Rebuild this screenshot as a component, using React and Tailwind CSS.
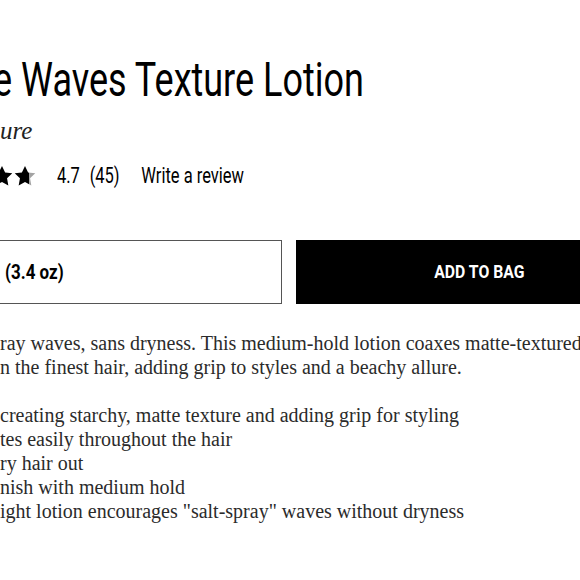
import React from 'react';

const Star = ({ id, fill = 1 }) => (
  <svg viewBox="0 0 24 24" className="w-[22px] h-[22px] shrink-0">
    <defs>
      <linearGradient id={id}>
        <stop offset={`${fill * 100}%`} stopColor="#000" />
        <stop offset={`${fill * 100}%`} stopColor="#a3a3a3" />
      </linearGradient>
    </defs>
    <path
      d="M12 1l3.4 7.1 7.8 1-5.7 5.4 1.4 7.8L12 18.5l-6.9 3.8 1.4-7.8L.8 9.1l7.8-1z"
      fill={`url(#${id})`}
    />
  </svg>
);

const bullets = [
  'creating starchy, matte texture and adding grip for styling',
  'tes easily throughout the hair',
  'ry hair out',
  'nish with medium hold',
  'ight lotion encourages "salt-spray" waves without dryness',
];

export default function App() {
  return (
    <div className="w-[580px] h-[580px] overflow-hidden bg-white text-black font-['Roboto',sans-serif]">
      <div className="pt-[56px]">
        <h1 className="-ml-[7px] text-[48px] leading-[48px] whitespace-nowrap origin-left scale-x-[0.75]">
          e Waves Texture Lotion
        </h1>
      </div>
      <p className="mt-[12px] text-[25px] leading-[30px] italic text-[#222] font-['Liberation_Serif',serif]">
        ure
      </p>

      <div className="mt-[18px] flex items-center h-[24px] -ml-[9px]">
        <div className="flex items-center gap-[1px]">
          <Star id="s4" />
          <Star id="s5" fill={0.68} />
        </div>
        <div className="ml-[21px] flex items-center text-[22px] leading-[24px] whitespace-nowrap origin-left scale-x-[0.75]">
          <span>4.7</span>
          <span className="ml-[13px]">(45)</span>
          <a className="ml-[29px]">Write a review</a>
        </div>
      </div>

      <div className="mt-[52px] flex gap-[14px] -ml-[84px]">
        <div className="w-[366px] h-[64px] shrink-0 border border-[#555] flex items-center pl-[88px]">
          <span className="text-[20px] font-bold whitespace-nowrap origin-left scale-x-[0.85]">(3.4 oz)</span>
        </div>
        <button className="w-[366px] h-[64px] shrink-0 bg-black text-white flex items-center justify-center">
          <span className="text-[19px] font-bold whitespace-nowrap scale-x-[0.83]">ADD TO BAG</span>
        </button>
      </div>

      <div className="mt-[27px] text-[20px] leading-[24px] text-[#2b2b2b] whitespace-nowrap font-['Liberation_Serif',serif]">
        <p>ray waves, sans dryness. This medium-hold lotion coaxes matte-textured</p>
        <p>n the finest hair, adding grip to styles and a beachy allure.</p>
        <ul className="mt-[24px]">
          {bullets.map((b) => (
            <li key={b}>{b}</li>
          ))}
        </ul>
      </div>
    </div>
  );
}
